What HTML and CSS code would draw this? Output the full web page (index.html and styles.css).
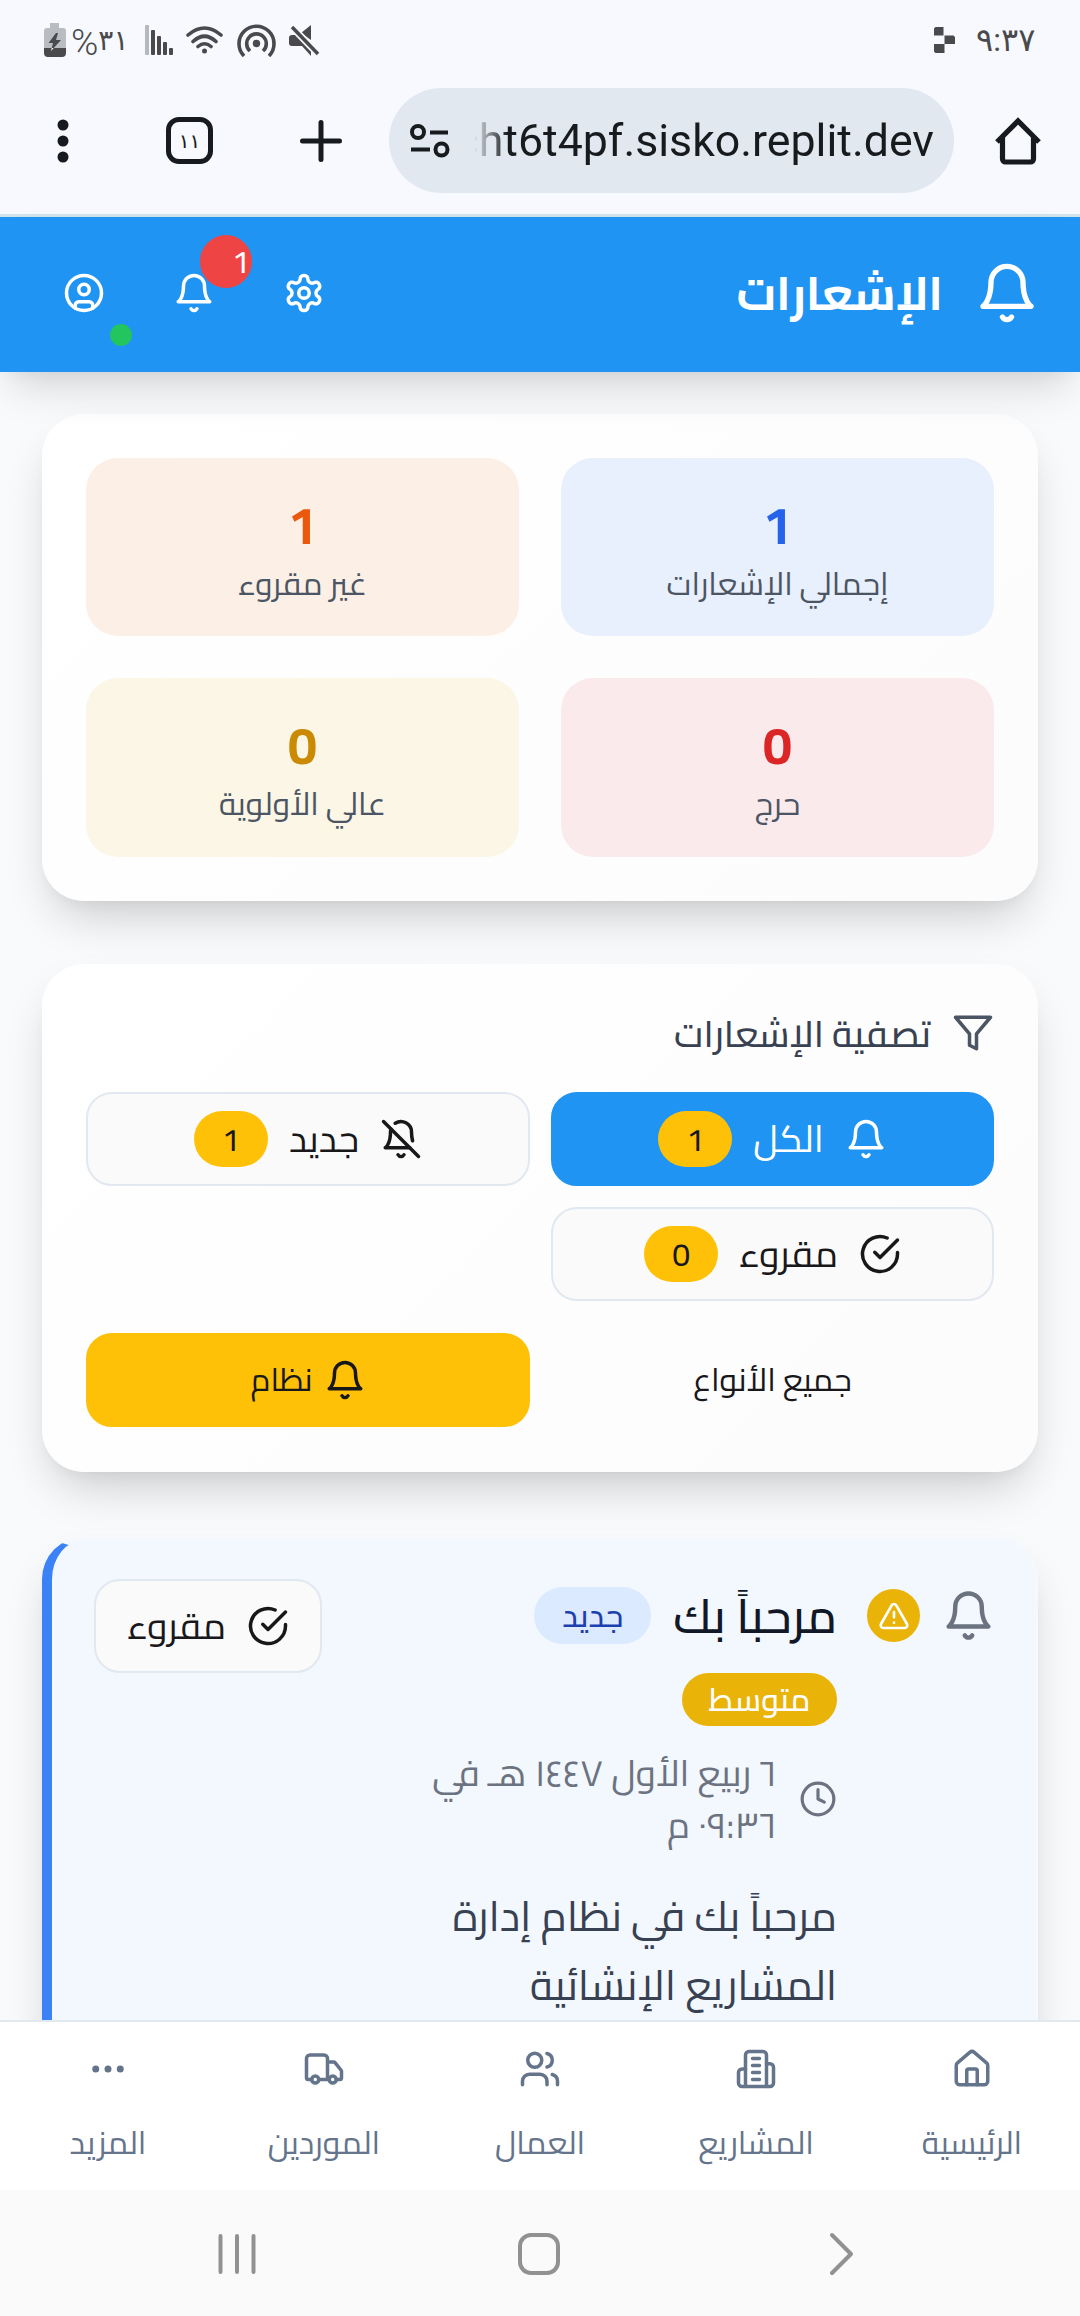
FILE: index.html
```html
<!DOCTYPE html>
<html lang="ar" dir="rtl">
<head>
<meta charset="utf-8">
<title>الإشعارات</title>
<link rel="stylesheet" href="styles.css">
</head>
<body>
<svg class="defs" width="0" height="0" aria-hidden="true">
  <symbol id="bell" viewBox="0 0 24 24"><path d="M6 8a6 6 0 0 1 12 0c0 7 3 9 3 9H3s3-2 3-9"/><path d="M10.3 21a1.94 1.94 0 0 0 3.4 0"/></symbol>
  <symbol id="bell-off" viewBox="0 0 24 24"><path d="M8.7 3A6 6 0 0 1 18 8a21.3 21.3 0 0 0 .6 5"/><path d="M17 17H3s3-2 3-9a4.67 4.67 0 0 1 .3-1.7"/><path d="M10.3 21a1.94 1.94 0 0 0 3.4 0"/><path d="m2 2 20 20"/></symbol>
  <symbol id="check" viewBox="0 0 24 24"><path d="M22 11.08V12a10 10 0 1 1-5.93-9.14"/><path d="m9 11 3 3L22 4"/></symbol>
  <symbol id="gear" viewBox="0 0 24 24"><path d="M12.22 2h-.44a2 2 0 0 0-2 2v.18a2 2 0 0 1-1 1.73l-.43.25a2 2 0 0 1-2 0l-.15-.08a2 2 0 0 0-2.73.73l-.22.38a2 2 0 0 0 .73 2.73l.15.1a2 2 0 0 1 1 1.72v.51a2 2 0 0 1-1 1.74l-.15.09a2 2 0 0 0-.73 2.73l.22.38a2 2 0 0 0 2.73.73l.15-.08a2 2 0 0 1 2 0l.43.25a2 2 0 0 1 1 1.73V20a2 2 0 0 0 2 2h.44a2 2 0 0 0 2-2v-.18a2 2 0 0 1 1-1.73l.43-.25a2 2 0 0 1 2 0l.15.08a2 2 0 0 0 2.73-.73l.22-.39a2 2 0 0 0-.73-2.73l-.15-.08a2 2 0 0 1-1-1.74v-.5a2 2 0 0 1 1-1.74l.15-.09a2 2 0 0 0 .73-2.73l-.22-.38a2 2 0 0 0-2.73-.73l-.15.08a2 2 0 0 1-2 0l-.43-.25a2 2 0 0 1-1-1.73V4a2 2 0 0 0-2-2z"/><circle cx="12" cy="12" r="3"/></symbol>
</svg>

<div class="status">
  <div class="status-side">
    <span class="clock-time" dir="ltr">٩:٣٧</span>
    <svg class="replit" width="21" height="26" viewBox="0 0 21 26"><path fill="#4a4a4c" d="M1.500 0H9.500V8.500H0V1.500zM10.500 8.500H19.500L21 10V17H10.500zM0 17H10.500V26H1.500L0 24.500z"/></svg>
  </div>
  <div class="status-side status-icons" dir="ltr">
    <svg width="22" height="34" viewBox="0 0 22 34"><path fill="#b9bcc1" d="M6 0h9v5h4a3 3 0 0 1 3 3v17H0V8a3 3 0 0 1 3-3h3z"/><path fill="#4a4a4c" d="M0 25h22v5a4 4 0 0 1-4 4H4a4 4 0 0 1-4-4zM12 10 4.500 20H9l-2 8L17 17h-5l2-7z"/></svg>
    <span class="battery-text"><span class="percent">%</span><span class="level">٣١</span></span>
    <svg class="sig" width="28" height="30" viewBox="0 0 28 30"><g fill="#4a4a4c"><rect width="4" height="30" rx="1" fill="#b5b8bd"/><rect x="6" y="5" width="4" height="25" rx="1"/><rect x="12" y="11" width="4" height="19" rx="1"/><rect x="18" y="17" width="4" height="13" rx="1"/><rect x="24" y="23" width="4" height="7" rx="1"/></g></svg>
    <svg class="wifi" width="37" height="28" viewBox="0 0 37 28"><g fill="none" stroke="#4a4a4c" stroke-width="3.600" stroke-linecap="round"><path d="M2 9Q18.500-5 35 9M7 15.500Q18.500 5 30 15.500M12 20.500Q18.500 15 25 20.500"/></g><circle cx="18.500" cy="25" r="2.500" fill="#4a4a4c"/></svg>
    <svg class="hotspot" width="39" height="33" viewBox="0 0 39 33"><g fill="none" stroke="#4a4a4c" stroke-width="3.600"><path d="M7 32A17.500 17.500 0 1 1 32 32"/><path d="M13 27A9.800 9.800 0 1 1 26 27"/></g><circle cx="19.500" cy="19.500" r="3.700" fill="#4a4a4c"/></svg>
    <svg class="mute" width="31" height="31" viewBox="0 0 31 31"><path fill="#4a4a4c" d="M3 10h5l14 14v7l-9-10H3a3 3 0 0 1-3-3v-5a3 3 0 0 1 3-3zM12 8l10-8v15z"/><path d="M3 2 29 29" stroke="#f7f9ff" stroke-width="7"/><path d="M3 2 29 29" stroke="#4a4a4c" stroke-width="3.500"/></svg>
  </div>
</div>

<div class="browser">
  <svg class="b-home" width="48" height="48" viewBox="0 0 48 48"><path d="M3 25 24 4l21 21M8.500 20v22a3 3 0 0 0 3 3h25a3 3 0 0 0 3-3V20" fill="none" stroke="#171b1e" stroke-width="5.200" stroke-linejoin="miter"/></svg>
  <div class="url" dir="ltr">
    <svg width="40" height="34" viewBox="0 0 40 34"><g fill="none" stroke="#171b1e" stroke-width="4"><circle cx="8" cy="8" r="6"/><path d="M20 8.500h18M1 25.500h19"/><circle cx="31.500" cy="25.500" r="6"/></g></svg>
    <span class="url-clip"><span class="url-text">cht6t4pf.sisko.replit.dev</span></span>
  </div>
  <svg class="b-plus" width="42" height="42" viewBox="0 0 42 42"><path d="M21 2.500v37M2.500 21h37" stroke="#171b1e" stroke-width="5" stroke-linecap="round"/></svg>
  <div class="tabs"><span>١١</span></div>
  <svg class="b-menu" width="12" height="44" viewBox="0 0 12 44"><g fill="#171b1e"><circle cx="6" cy="6" r="5.500"/><circle cx="6" cy="22" r="5.500"/><circle cx="6" cy="38" r="5.500"/></g></svg>
</div>

<header class="appbar">
  <div class="brand">
    <svg class="ic i64"><use href="#bell"/></svg>
    <h1>الإشعارات</h1>
  </div>
  <div class="actions">
    <div class="act"><svg class="ic"><use href="#gear"/></svg></div>
    <div class="act"><svg class="ic"><use href="#bell"/></svg><span class="count">1</span></div>
    <div class="act"><svg class="ic" viewBox="0 0 24 24"><circle cx="12" cy="12" r="10"/><circle cx="12" cy="10" r="3"/><path d="M7 20.662V19a2 2 0 0 1 2-2h6a2 2 0 0 1 2 2v1.662"/></svg><span class="online"></span></div>
  </div>
</header>

<main>
  <section class="card stats">
    <div class="tile blue"><b>1</b><span class="t">إجمالي الإشعارات</span></div>
    <div class="tile orange"><b>1</b><span class="t">غير مقروء</span></div>
    <div class="tile red"><b>0</b><span class="t">حرج</span></div>
    <div class="tile yellow"><b>0</b><span class="t">عالي الأولوية</span></div>
  </section>

  <section class="card filters">
    <div class="f-head"><svg class="ic" viewBox="0 0 24 24"><path d="M22 3H2l8 9.460V19l4 2v-8.540L22 3z"/></svg><span class="t">تصفية الإشعارات</span></div>
    <div class="f-grid">
      <div class="btn primary"><svg class="ic"><use href="#bell"/></svg><span class="t">الكل</span><i>1</i></div>
      <div class="btn"><svg class="ic"><use href="#bell-off"/></svg><span class="t">جديد</span><i>1</i></div>
      <div class="btn"><svg class="ic"><use href="#check"/></svg><span class="t">مقروء</span><i>0</i></div>
    </div>
    <div class="f-grid types">
      <div class="btn ghost"><span class="t">جميع الأنواع</span></div>
      <div class="btn amber"><svg class="ic"><use href="#bell"/></svg><span class="t">نظام</span></div>
    </div>
  </section>

  <section class="card note">
    <svg class="ic i53"><use href="#bell"/></svg>
    <div class="warn"><svg class="ic" viewBox="0 0 24 24"><path d="m21.730 18-8-14a2 2 0 0 0-3.480 0l-8 14A2 2 0 0 0 4 21h16a2 2 0 0 0 1.730-3Z"/><path d="M12 9v4M12 17h.01"/></svg></div>
    <div class="n-body">
      <div class="n-head"><h2 class="t">مرحباً بك</h2><span class="new">جديد</span></div>
      <span class="prio">متوسط</span>
      <div class="date"><svg class="ic i38" viewBox="0 0 24 24"><circle cx="12" cy="12" r="10"/><path d="M12 6v6l4 2"/></svg><div><p class="t">٦ ربيع الأول ١٤٤٧ هـ في</p><p class="t">٠٩:٣٦ م</p></div></div>
      <div class="msg"><p class="t">مرحباً بك في نظام إدارة</p><p class="t">المشاريع الإنشائية</p></div>
    </div>
    <div class="btn mark"><svg class="ic"><use href="#check"/></svg><span class="t">مقروء</span></div>
  </section>
</main>

<nav>
  <div><svg class="ic" viewBox="0 0 24 24"><path d="M15 21v-8a1 1 0 0 0-1-1h-4a1 1 0 0 0-1 1v8"/><path d="M3 10a2 2 0 0 1 .709-1.528l7-5.999a2 2 0 0 1 2.582 0l7 5.999A2 2 0 0 1 21 10v9a2 2 0 0 1-2 2H5a2 2 0 0 1-2-2z"/></svg><span class="t">الرئيسية</span></div>
  <div><svg class="ic" viewBox="0 0 24 24"><path d="M6 22V4a2 2 0 0 1 2-2h8a2 2 0 0 1 2 2v18Z"/><path d="M6 12H4a2 2 0 0 0-2 2v6a2 2 0 0 0 2 2h2M18 9h2a2 2 0 0 1 2 2v9a2 2 0 0 1-2 2h-2M10 6h4M10 10h4M10 14h4M10 18h4"/></svg><span class="t">المشاريع</span></div>
  <div><svg class="ic" viewBox="0 0 24 24"><path d="M16 21v-2a4 4 0 0 0-4-4H6a4 4 0 0 0-4 4v2"/><circle cx="9" cy="7" r="4"/><path d="M22 21v-2a4 4 0 0 0-3-3.870M16 3.130a4 4 0 0 1 0 7.750"/></svg><span class="t">العمال</span></div>
  <div><svg class="ic" viewBox="0 0 24 24"><path d="M14 18V6a2 2 0 0 0-2-2H4a2 2 0 0 0-2 2v11a1 1 0 0 0 1 1h2M15 18H9M19 18h2a1 1 0 0 0 1-1v-3.650a1 1 0 0 0-.220-.624l-3.480-4.350A1 1 0 0 0 17.520 8H14"/><circle cx="17" cy="18" r="2"/><circle cx="7" cy="18" r="2"/></svg><span class="t">الموردين</span></div>
  <div><svg class="ic" viewBox="0 0 24 24"><circle cx="12" cy="12" r="1"/><circle cx="19" cy="12" r="1"/><circle cx="5" cy="12" r="1"/></svg><span class="t">المزيد</span></div>
</nav>

<footer class="sysbar" dir="ltr">
  <svg width="44" height="44" viewBox="0 0 44 44"><path d="M5.500 4v36M22 4v36M38.500 4v36"/></svg>
  <svg width="44" height="44" viewBox="0 0 44 44"><rect x="3" y="3" width="38" height="38" rx="11"/></svg>
  <svg width="44" height="44" viewBox="0 0 44 44"><path d="m13 3 19 19-19 19"/></svg>
</footer>
</body>
</html>
```
FILE: styles.css
```css
* { box-sizing: border-box; margin: 0; padding: 0; }
html, body { width: 1080px; height: 2316px; overflow: hidden; }
body {
  display: flex;
  flex-direction: column;
  background: #f8fafc;
  color: #18181b;
  font-family: "Cairo", "Noto Kufi Arabic", "Noto Sans Arabic", "DejaVu Sans", sans-serif;
  font-size: 37px;
}
.defs { position: absolute; }
svg { display: block; flex: none; }
.ic { width: 42px; height: 42px; fill: none; stroke: currentColor; stroke-width: 2; stroke-linecap: round; stroke-linejoin: round; }
.i64 { width: 64px; height: 64px; }
.i53 { width: 53px; height: 53px; }
.i38 { width: 38px; height: 38px; }
.t { display: inline-block; white-space: nowrap; }

.status { flex: none; height: 80px; padding: 0 44px; display: flex; justify-content: space-between; background: #f7f9ff; color: #4a4a4c; }
.status-side { display: flex; align-items: center; height: 80px; font-family: Roboto, "DejaVu Sans", sans-serif; font-size: 32px; }
.clock-time { width: 60px; }
.replit { margin-right: 21px; }
.battery-text { width: 57px; margin-left: 5px; display: flex; align-items: center; }
.percent { font-size: 37px; font-weight: 300; padding-top: 4px; }
.level { font-size: 28px; }
.sig { margin-left: 17px; }
.wifi { margin-left: 13px; }
.hotspot { margin-left: 14px; }
.mute { margin-left: 13px; }

.browser { flex: none; height: 137px; padding: 8px 38px 21px 57px; display: flex; align-items: center; background: #f7f9ff; border-bottom: 3px solid #d3e3ea; }
.url { width: 565px; height: 105px; margin-right: 40px; border-radius: 53px; padding: 0 20px 0 21px; display: flex; align-items: center; justify-content: space-between; background: #e1e8f0; }
.url-clip { width: 460px; overflow: hidden; display: flex; justify-content: flex-end; -webkit-mask-image: linear-gradient(90deg, transparent, #000 34px); mask-image: linear-gradient(90deg, transparent, #000 34px); }
.url-text { font: 44.7px/60px Roboto, sans-serif; color: #171b1e; padding-top: 1px; }
.b-plus { margin-right: 47px; }
.tabs { width: 47px; height: 47px; margin-right: 87px; border: 5px solid #171b1e; border-radius: 13px; display: flex; align-items: center; justify-content: center; font-family: "DejaVu Sans", sans-serif; font-size: 20px; color: #171b1e; }
.b-menu { margin-right: 97px; }

.appbar { position: relative; z-index: 2; flex: none; height: 155px; padding: 0 41px 4px; display: flex; justify-content: space-between; align-items: center; background: #2094f3; color: #fff; box-shadow: 0 24px 44px -12px rgba(0,0,0,.16), 0 8px 16px -8px rgba(0,0,0,.06); }
.brand { display: flex; align-items: center; gap: 32px; }
h1 { font-size: 47px; line-height: 64px; }
.actions { display: flex; gap: 25px; }
.act { position: relative; width: 85px; height: 85px; display: flex; align-items: center; justify-content: center; }
.count { position: absolute; left: 49px; top: -15px; width: 52px; height: 53px; padding-right: 2px; border-radius: 50%; background: #ef4444; font-size: 32px; font-weight: 500; line-height: 53px; }
.online { position: absolute; left: 69px; top: 74px; width: 22px; height: 22px; border-radius: 50%; background: #22c55e; }

main { flex: 1; min-height: 0; overflow: hidden; padding: 42px 42px 0; display: flex; flex-direction: column; }
.card { flex: none; border-radius: 42px; background: linear-gradient(135deg, #fff, #fdfcfd); box-shadow: 0 24px 48px -12px rgba(0,0,0,.2), 0 8px 16px -8px rgba(0,0,0,.06); }
.stats { height: 487px; padding: 44px; display: grid; grid-template-columns: 433px 433px; grid-template-rows: 178px 179px; gap: 42px; }
.tile { border-radius: 32px; display: flex; flex-direction: column; align-items: center; gap: 11px; color: #4b5563; padding-top: 41px; font-size: 31.6px; line-height: 44px; }
.tile b { font-size: 53px; line-height: 52px; }
.tile.blue { background: #e8effd; } .blue b { color: #2563eb; }
.tile.orange { background: #fcefe6; } .orange b { color: #ea580c; }
.tile.red { background: #fbeaeb; } .red b { color: #dc2626; }
.tile.yellow { background: #fcf6e6; } .yellow b { color: #ca8a04; }

.filters { height: 508px; margin-top: 63px; padding: 48px 44px 44px; }
.f-head { display: flex; align-items: center; gap: 21px; height: 42px; margin-bottom: 38px; color: #4b5563; }
.f-head .t { color: #374151; font-weight: 500; }
.f-grid { display: grid; grid-template-columns: 443px 444px; grid-auto-rows: 94px; gap: 21px; }
.types { margin-top: 32px; font-size: 32px; }
.btn { height: 94px; border: 2px solid #e2e8f0; border-radius: 26px; background: #fafafa; display: flex; align-items: center; justify-content: center; gap: 21px; }
.btn .t { margin-top: -2px; }
.btn i { width: 74px; height: 56px; border-radius: 28px; background: #ffc107; color: #18181b; font-style: normal; font-weight: 500; font-size: 32px; line-height: 56px; text-align: center; }
.btn.primary { background: #2094f3; border-color: #2094f3; color: #fff; }
.btn.ghost { background: none; border-color: transparent; }
.btn.amber { background: #ffc107; border-color: #ffc107; gap: 11px; }

.note { position: relative; height: 560px; margin-top: 65px; padding: 39px 40px 0 43px; border: solid #f5f9fe; border-width: 3px 3px 0 10px; border-left-color: #3b82f6; background: #f3f7fe; display: flex; align-items: flex-start; }
.i53 { margin-top: 10px; color: #6b7280; }
.warn { width: 53px; height: 53px; margin: 10px 22px 0 30px; border-radius: 50%; background: #eab308; color: #fff; display: flex; align-items: center; justify-content: center; }
.warn .ic { width: 32px; height: 32px; }
.n-body { flex: 1; }
.n-head { display: flex; gap: 22px; height: 73px; align-items: center; }
h2 { font-size: 47.7px; line-height: 73px; font-weight: 500; color: #111827; }
.new, .prio { display: flex; align-items: center; justify-content: center; font-size: 32px; font-weight: 500; line-height: 50px; padding-bottom: 2px; }
.new { width: 117px; height: 57px; border-radius: 29px; background: #dbeafe; color: #1e40af; }
.prio { width: 155px; height: 53px; margin-top: 21px; border-radius: 27px; background: #eab308; color: #fff; }
.date { display: flex; align-items: center; gap: 22px; margin-top: 21px; color: #6b7280; font-size: 36.8px; line-height: 52px; }
.date div, .msg { display: flex; flex-direction: column; align-items: flex-start; }
.msg { margin-top: 30px; color: #374151; font-size: 42px; line-height: 69px; }
.mark { flex: none; width: 228px; margin-left: -1px; }

nav { position: relative; z-index: 2; flex: none; height: 170px; border-top: 2px solid #e2e8f0; background: #fff; color: #64748b; display: grid; grid-template-columns: repeat(5, 216px); font-size: 32px; }
nav div { display: flex; flex-direction: column; align-items: center; padding-top: 26px; }
nav .t { line-height: 44px; margin-top: 30px; }

.sysbar { flex: none; height: 126px; padding: 2px 217px 0 215px; display: flex; align-items: center; justify-content: space-between; background: #fafafa; }
.sysbar svg { fill: none; stroke: #919191; stroke-width: 4; stroke-linecap: round; stroke-linejoin: round; }
```
